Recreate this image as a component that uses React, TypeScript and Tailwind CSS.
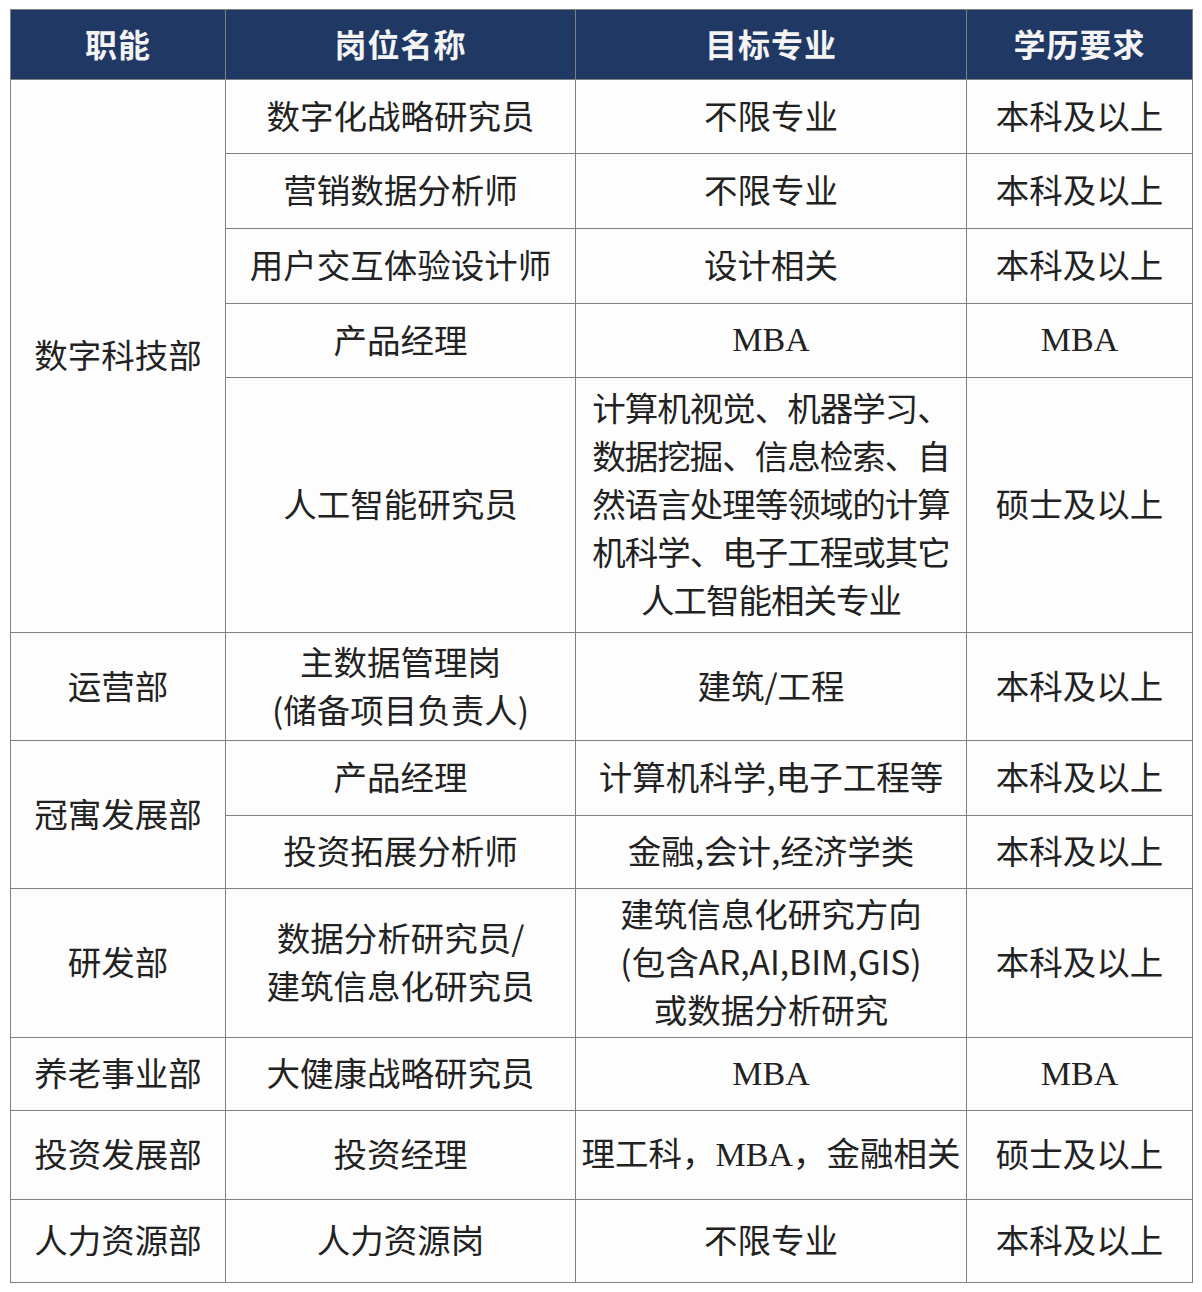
const cjk = "font-['Noto_Sans_CJK_SC','Noto_Sans',sans-serif]"
const serif = "font-['Liberation_Serif','Noto_Sans_CJK_SC',serif]"

function Mba({ children }: { children: React.ReactNode }) {
  return <span className={`${serif} text-[34px]`}>{children}</span>
}

const td = "border border-[#808080] text-center align-middle px-2 pb-[4px] text-[33.5px] leading-[48px] text-[#222] whitespace-nowrap"

export default function App() {
  return (
    <div className={`bg-white w-[1202px] h-[1292px] pt-[9px] pl-[10px] ${cjk}`}>
      <table className="table-fixed border-collapse w-[1182px] bg-[#fdfdfd]">
        <colgroup>
          <col className="w-[215px]" />
          <col className="w-[350px]" />
          <col className="w-[391px]" />
          <col className="w-[226px]" />
        </colgroup>
        <thead>
          <tr className="h-[70px] bg-[#1f3864] text-white">
            {["职能", "岗位名称", "目标专业", "学历要求"].map((h) => (
              <th key={h} className="border border-[#808080] pb-[4px] text-[32px] font-bold text-[#f4f4f4] tracking-[1px]">
                {h}
              </th>
            ))}
          </tr>
        </thead>
        <tbody>
          <tr className="h-[74px]">
            <td rowSpan={5} className={td}>数字科技部</td>
            <td className={td}>数字化战略研究员</td>
            <td className={td}>不限专业</td>
            <td className={td}>本科及以上</td>
          </tr>
          <tr className="h-[75px]">
            <td className={td}>营销数据分析师</td>
            <td className={td}>不限专业</td>
            <td className={td}>本科及以上</td>
          </tr>
          <tr className="h-[75px]">
            <td className={td}>用户交互体验设计师</td>
            <td className={td}>设计相关</td>
            <td className={td}>本科及以上</td>
          </tr>
          <tr className="h-[74px]">
            <td className={td}>产品经理</td>
            <td className={td}><Mba>MBA</Mba></td>
            <td className={td}><Mba>MBA</Mba></td>
          </tr>
          <tr className="h-[255px]">
            <td className={td}>人工智能研究员</td>
            <td className={`${td} !px-0 tracking-[-1px]`}>
              计算机视觉、机器学习、
              <br />
              数据挖掘、信息检索、自
              <br />
              然语言处理等领域的计算
              <br />
              机科学、电子工程或其它
              <br />
              人工智能相关专业
            </td>
            <td className={td}>硕士及以上</td>
          </tr>
          <tr className="h-[108px]">
            <td className={td}>运营部</td>
            <td className={td}>
              主数据管理岗
              <br />
              (储备项目负责人)
            </td>
            <td className={td}>建筑/工程</td>
            <td className={td}>本科及以上</td>
          </tr>
          <tr className="h-[75px]">
            <td rowSpan={2} className={td}>冠寓发展部</td>
            <td className={td}>产品经理</td>
            <td className={td}>计算机科学,电子工程等</td>
            <td className={td}>本科及以上</td>
          </tr>
          <tr className="h-[73px]">
            <td className={td}>投资拓展分析师</td>
            <td className={td}>金融,会计,经济学类</td>
            <td className={td}>本科及以上</td>
          </tr>
          <tr className="h-[149px]">
            <td className={td}>研发部</td>
            <td className={td}>
              数据分析研究员/
              <br />
              建筑信息化研究员
            </td>
            <td className={td}>
              建筑信息化研究方向
              <br />
              (包含AR,AI,BIM,GIS)
              <br />
              或数据分析研究
            </td>
            <td className={td}>本科及以上</td>
          </tr>
          <tr className="h-[73px]">
            <td className={td}>养老事业部</td>
            <td className={td}>大健康战略研究员</td>
            <td className={td}><Mba>MBA</Mba></td>
            <td className={td}><Mba>MBA</Mba></td>
          </tr>
          <tr className="h-[89px]">
            <td className={td}>投资发展部</td>
            <td className={td}>投资经理</td>
            <td className={`${td} !px-0`}>
              理工科，<Mba>MBA</Mba>，金融相关
            </td>
            <td className={td}>硕士及以上</td>
          </tr>
          <tr className="h-[83px]">
            <td className={td}>人力资源部</td>
            <td className={td}>人力资源岗</td>
            <td className={td}>不限专业</td>
            <td className={td}>本科及以上</td>
          </tr>
        </tbody>
      </table>
    </div>
  )
}
